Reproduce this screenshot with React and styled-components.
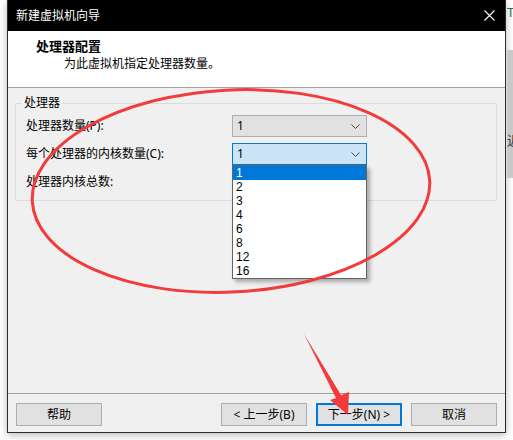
import React from 'react'
import styled, { createGlobalStyle } from 'styled-components'

const GlobalStyle = createGlobalStyle`
  body {
    margin: 0;
    background: #fff;
    font-family: "Noto Sans", "Noto Sans CJK SC", sans-serif;
    font-size: 12px;
    color: #000;
  }
`;

const Page = styled.div`
  position: relative;
  display: flex;
  width: 513px;
  height: 440px;
  padding-left: 7px;
  box-sizing: border-box;
  overflow: hidden;
`;

const Dialog = styled.div`
  display: flex;
  flex-direction: column;
  flex-shrink: 0;
  width: 499px;
  height: 433px;
  box-sizing: border-box;
  border: 1px solid #2b2b2b;
  border-top: none;
  background: #f0f0f0;
  box-shadow: 0 2px 8px rgba(0, 0, 0, 0.28);
`;

const TitleBar = styled.div`
  display: flex;
  align-items: center;
  justify-content: space-between;
  height: 31px;
  flex-shrink: 0;
  padding: 0 10px 0 8px;
  background: #000;
  color: #fff;
  line-height: 16px;
`;

const Header = styled.div`
  height: 57px;
  flex-shrink: 0;
  background: #fff;
  border-bottom: 1px solid #a0a0a0;
  padding: 7px 0 0 28px;
  box-sizing: border-box;
  line-height: 16px;
`;

const HeaderTitle = styled.div`
  font-weight: bold;
  font-size: 13px;
`;

const HeaderText = styled.div`
  margin-top: 2px;
  padding-left: 28px;
`;

const Body = styled.div`
  flex: 1;
  padding: 8px 8px 0 7px;
`;

const Group = styled.fieldset`
  margin: 0;
  padding: 2px 0 4px 10px;
  border: 1px solid #dcdcdc;
  min-inline-size: 0;
`;

const Legend = styled.legend`
  margin-left: -4px;
  padding: 0 2px;
  line-height: 14px;
`;

const Row = styled.div`
  display: flex;
  align-items: center;
  height: 28px;
`;

const Label = styled.div`
  width: 206px;
  line-height: 16px;
`;

const Combo = styled.div`
  position: relative;
  display: flex;
  align-items: center;
  justify-content: space-between;
  width: 135px;
  height: 22px;
  box-sizing: border-box;
  padding: 0 6px 0 4px;
  border: 1px solid ${p => (p.$active ? '#0078d7' : '#adadad')};
  background: ${p => (p.$active ? '#cce4f7' : '#e1e1e1')};
  line-height: 16px;
`;

const DropList = styled.ul`
  position: absolute;
  top: 21px;
  left: -1px;
  width: 135px;
  box-sizing: border-box;
  margin: 0;
  padding: 0;
  list-style: none;
  background: #fff;
  border: 1px solid #646464;
  box-shadow: 3px 3px 4px rgba(0, 0, 0, 0.3);
  z-index: 2;
`;

const Item = styled.li`
  height: 14px;
  line-height: 14px;
  padding-left: 3px;
  font-family: "Liberation Sans", sans-serif;
  font-size: 12px;
  background: ${p => (p.$selected ? '#0078d7' : 'transparent')};
  color: ${p => (p.$selected ? '#fff' : '#000')};
`;

const Footer = styled.div`
  display: flex;
  justify-content: space-between;
  height: 39px;
  flex-shrink: 0;
  box-sizing: border-box;
  padding: 9px 8px 0 8px;
  border-top: 1px solid #a0a0a0;
`;

const NavGroup = styled.div`
  display: flex;
  gap: 9px;
`;

const Button = styled.button`
  width: 86px;
  height: 23px;
  box-sizing: border-box;
  padding: 0;
  border: ${p => (p.$default ? '2px solid #0078d7' : '1px solid #adadad')};
  background: #e1e1e1;
  font-family: inherit;
  font-size: 12px;
  line-height: 16px;
  color: #000;
`;

const Side = styled.div`
  display: flex;
  flex-direction: column;
  flex: 1;
  min-width: 0;
  overflow: hidden;
  padding-left: 1px;
`;

const SideText = styled.div`
  height: 50px;
  padding-top: 4px;
  box-sizing: border-box;
  color: #217346;
  font-size: 13px;
  line-height: 16px;
`;

const SidePanel = styled.div`
  height: 128px;
  background: #c9c9c9;
  padding-top: 80px;
  box-sizing: border-box;
  color: #333;
  font-size: 13px;
  white-space: nowrap;
`;

const Overlay = styled.svg`
  position: absolute;
  left: 0;
  top: 0;
  pointer-events: none;
  z-index: 5;
`;

const Chevron = () => (
  <svg width="9" height="5" viewBox="0 0 9 5">
    <path d="M0.5 0.5 L4.5 4.5 L8.5 0.5" fill="none" stroke="#444" strokeWidth="1" />
  </svg>
)

const CloseIcon = () => (
  <svg width="11" height="11" viewBox="0 0 11 11">
    <path d="M0.5 0.5 L10.5 10.5 M10.5 0.5 L0.5 10.5" stroke="#fff" strokeWidth="1.1" />
  </svg>
)

const cores = ['1', '2', '3', '4', '6', '8', '12', '16'];

export default function App() {
  return (
    <>
      <GlobalStyle />
      <Page>
        <Dialog>
          <TitleBar>
            <span>新建虚拟机向导</span>
            <CloseIcon />
          </TitleBar>
          <Header>
            <HeaderTitle>处理器配置</HeaderTitle>
            <HeaderText>为此虚拟机指定处理器数量。</HeaderText>
          </Header>
          <Body>
            <Group>
              <Legend>处理器</Legend>
              <Row>
                <Label>处理器数量(P):</Label>
                <Combo>
                  <span>1</span>
                  <Chevron />
                </Combo>
              </Row>
              <Row>
                <Label>每个处理器的内核数量(C):</Label>
                <Combo $active>
                  <span>1</span>
                  <Chevron />
                  <DropList>
                    {cores.map(c => (
                      <Item key={c} $selected={c === '1'}>{c}</Item>
                    ))}
                  </DropList>
                </Combo>
              </Row>
              <Row>
                <Label>处理器内核总数:</Label>
              </Row>
            </Group>
          </Body>
          <Footer>
            <Button>帮助</Button>
            <NavGroup>
              <Button>&lt; 上一步(B)</Button>
              <Button $default>下一步(N) &gt;</Button>
              <Button>取消</Button>
            </NavGroup>
          </Footer>
        </Dialog>
        <Side>
          <SideText>T</SideText>
          <SidePanel>近</SidePanel>
        </Side>
        {/* hand-drawn markup: ellipse and arrow */}
        <Overlay width="513" height="440" viewBox="0 0 513 440">
          <ellipse
            cx="231"
            cy="191"
            rx="199"
            ry="101"
            transform="rotate(-3 231 191)"
            fill="none"
            stroke="#f23b3b"
            strokeWidth="3"
          />
          <polygon
            points="304,334 341,395 349,392 348,415 330,400 336,398"
            fill="#f23b3b"
          />
        </Overlay>
      </Page>
    </>
  )
}
